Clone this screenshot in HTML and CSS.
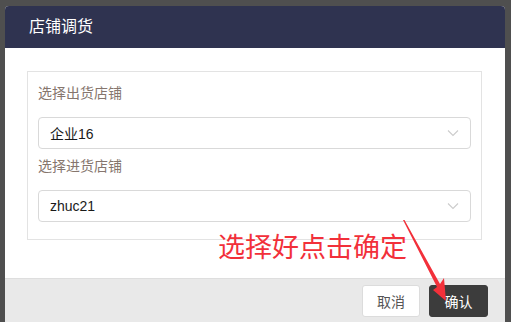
FILE: index.html
```html
<!DOCTYPE html>
<html lang="zh-CN">
<head>
    <meta charset="UTF-8">
    <title>店铺调货</title>
    <link rel="stylesheet" href="styles.css">
</head>
<body>
    <div class="modal">
        <div class="modal-header">店铺调货</div>

        <div class="modal-body">
            <div class="form-box">
                <div class="field">
                    <label>选择出货店铺</label>
                    <div class="select">
                        <span>企业16</span>
                        <svg class="chevron" width="12" height="8" viewBox="0 0 12 8"><path d="M1 1.5 L6 6.5 L11 1.5" fill="none" stroke="#cccccc" stroke-width="1.1"/></svg>
                    </div>
                </div>
                <div class="field">
                    <label>选择进货店铺</label>
                    <div class="select">
                        <span>zhuc21</span>
                        <svg class="chevron" width="12" height="8" viewBox="0 0 12 8"><path d="M1 1.5 L6 6.5 L11 1.5" fill="none" stroke="#cccccc" stroke-width="1.1"/></svg>
                    </div>
                </div>
            </div>
        </div>

        <div class="modal-footer">
            <button class="btn">取消</button>
            <button class="btn btn-dark">确认</button>
        </div>

        <!-- 标注 -->
        <div class="note">选择好点击确定</div>
        <svg class="arrow" width="60" height="90" viewBox="0 0 60 90">
            <polygon points="0,0 1.5,0 37,64 41,58 43,81 30,70 34,67" fill="#f2303a"/>
        </svg>
    </div>
</body>
</html>
```

FILE: styles.css
```css
:root {
    --header: #2f3350;
    --line: #e3e3e3;
    --label: #86766e;
    --red: #f2303a;
}

body {
    margin: 0;
    height: 322px;
    overflow: hidden;
    background: #4f4f4f;
    font-family: "Liberation Sans", "Noto Sans CJK SC", sans-serif;
}

.modal {
    position: relative;
    width: 500px;
    margin: 6px 0 0 5px;
    background: white;
    border-radius: 4px 4px 0 0;
    overflow: hidden;
}

.modal-header {
    height: 42px;
    line-height: 42px;
    padding-left: 24px;
    background: var(--header);
    color: white;
    font-size: 16px;
}

.modal-body {
    padding: 23px 23px 38px 22px;
    border-bottom: 1px solid #dedede;
}

.form-box {
    border: 1px solid var(--line);
    padding: 11px 10px 17px 10px;
}

.field label {
    display: block;
    font-size: 14px;
    line-height: 20px;
    color: var(--label);
    margin-bottom: 14px;
}

.field + .field {
    margin-top: 7px;
}

.select {
    height: 30px;
    border: 1px solid #d9d9d9;
    border-radius: 4px;
    display: flex;
    align-items: center;
    justify-content: space-between;
    padding: 0 11px 0 11px;
    font-size: 14px;
    color: #1a1a1a;
}

.modal-footer {
    display: flex;
    justify-content: flex-end;
    gap: 9px;
    padding: 6px 17px 5px 0;
    background: #e9e9e9;
}

.btn {
    height: 32px;
    width: 58px;
    border: 1px solid #dcdcdc;
    border-radius: 3px;
    background: white;
    color: #555;
    font-family: inherit;
    font-size: 14px;
    padding: 0;
}

.btn-dark {
    width: 59px;
    background: #3c3c3c;
    border-color: #3c3c3c;
    color: white;
}

.note {
    position: absolute;
    left: 213px;
    top: 224px;
    font-size: 27px;
    line-height: 36px;
    color: var(--red);
}

.arrow {
    position: absolute;
    left: 398px;
    top: 214px;
}
```
